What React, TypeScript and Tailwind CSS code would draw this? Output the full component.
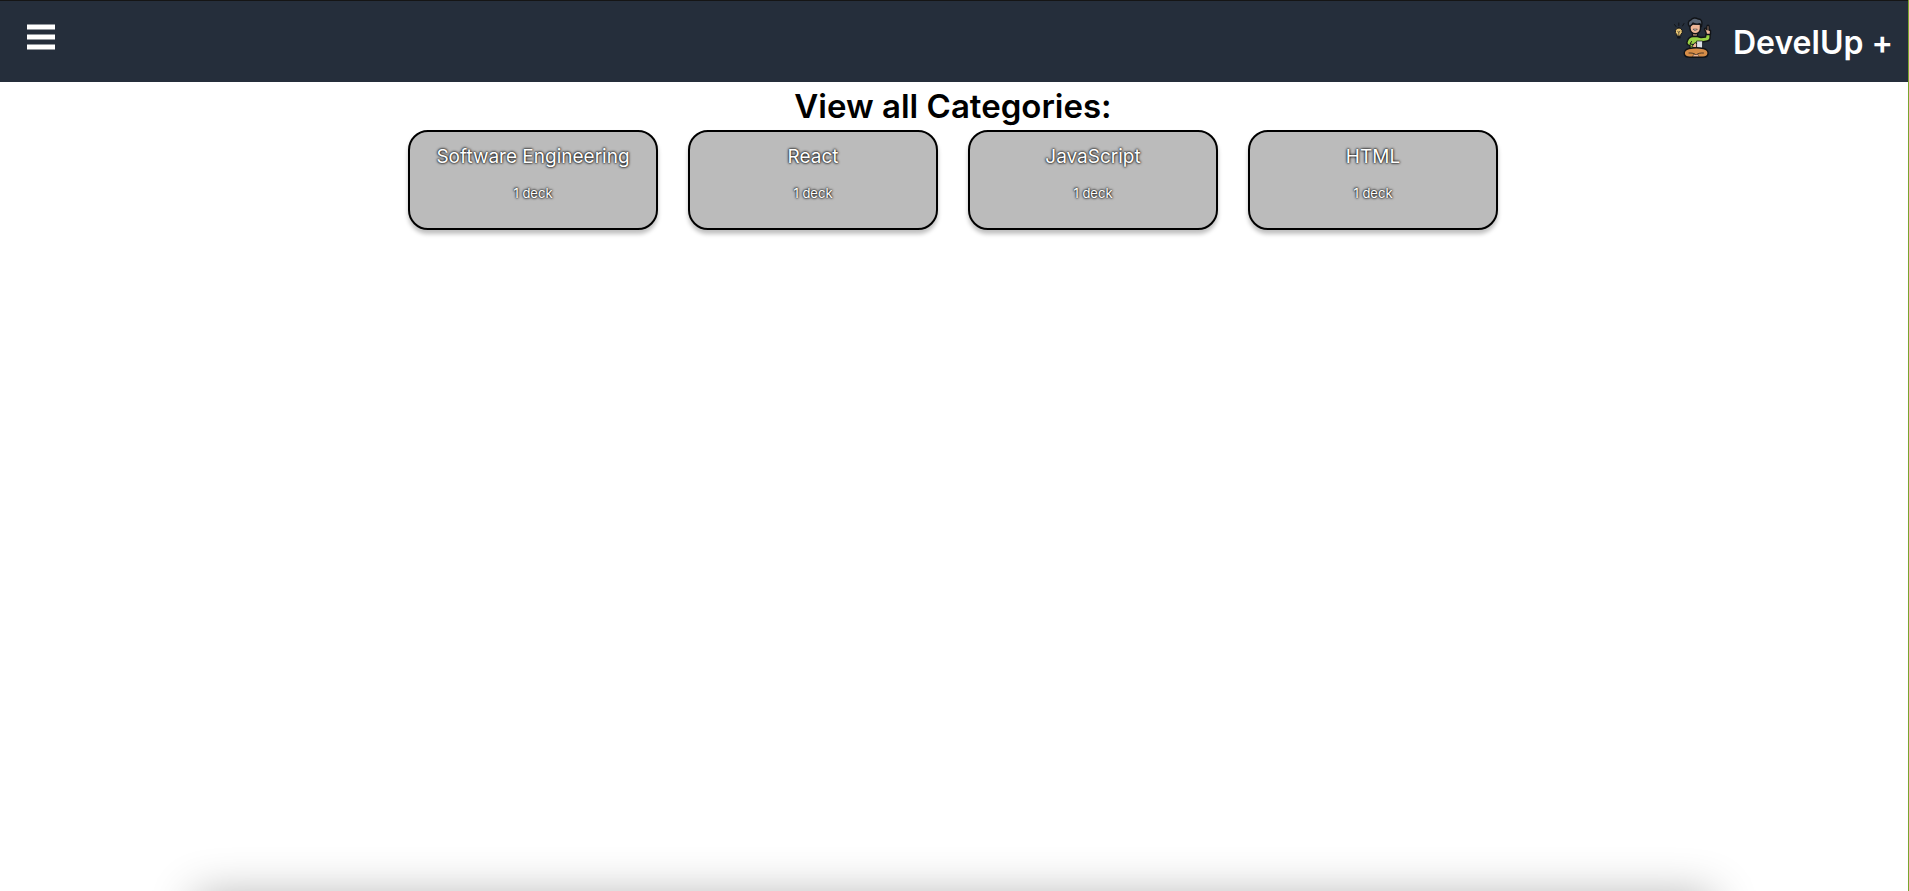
import React from "react";

const categories = ["Software Engineering", "React", "JavaScript", "HTML"];

function MenuIcon() {
  return (
    <svg viewBox="0 0 28 26" className="h-[26px] w-7" fill="#fff" aria-hidden="true">
      <path d="M0 .5h28v5H0zM0 10.500h28v5H0zM0 20.500h28v5H0z" />
    </svg>
  );
}

function Mascot() {
  return (
    <svg viewBox="0 0 40 42" className="h-[42px] w-10" stroke="#111317" strokeWidth="1.4" strokeLinejoin="round" strokeLinecap="round" aria-hidden="true">
      <path d="M5.800 6v2.500M1.500 7.500l1.500 2M11 6.500l-1.500 2.500" fill="none" strokeWidth="1" />
      <path d="M5.800 10.800a3.700 3.700 0 0 0-2 6.700V19h4v-1.500a3.700 3.700 0 0 0-2-6.700z" fill="#e6c372" strokeWidth="1" />
      <path d="M4.700 14.200l1.100 1.200 1.100-1.200M5.800 15.500V18" fill="none" strokeWidth=".6" />
      <path d="M5 20.500h1.800" strokeWidth="1.800" />
      <path d="M19.500 14.500h5v5h-5z" fill="#d9a281" />
      <path d="M17 7h10.500v4.500a5.200 5.200 0 0 1-10.500 0z" fill="#efb798" />
      <path d="M16.500 9.500c-2-2-1.500-6 1.500-6.500 1.500-2.500 5-2.500 7-1 3-.3 5 2.500 3.500 7.500L27 6.800c-2.500.6-5 .4-7-.8-.5 1.800-2 2.500-3.500 3.500z" fill="#586372" />
      <path d="M20.300 12.500c.8 1.500 3 1.500 3.800 0z" fill="#fff" strokeWidth=".5" />
      <path d="M33 15.500l-1.500-3.500c0-1 1.500-1.300 1.800 0l.7.8V9.500c0-1.600 2-1.600 2 0V13l1.500.5V17l-1 2h-3z" fill="#efb798" />
      <path d="M20 19.500h4.500l3.500 1 4.500-.5.500-2.500h4.200l-.2 4c-.3 1.500-1.200 2.300-2.700 2.500l-5.300 1V32H17v-3.500c-2.800-.2-3.800-2.300-2.500-4.800 1-2.600 2.800-4.200 5.500-4.200z" fill="#9bd345" />
      <path d="M18.500 24.500L17 27l3.500.5" fill="none" strokeWidth="1" />
      <path d="M19 29.500l3-4 2.500 1.500-1 4z" fill="#efb798" strokeWidth=".9" />
      <path d="M24 24h5.500v8H24z" fill="#dce1e8" strokeWidth=".7" />
      <path d="M16 31.500c5-1 9.500-1 14.500 0 3 .6 5 3 4.500 5.500-.4 2-2.300 3.300-5 3.300H16.500c-3 0-4.800-1.300-5.200-3.300-.4-2.500 1.700-4.900 4.700-5.500z" fill="#d68d48" />
      <path d="M16 36c3-.2 5.500.3 7.200 2 1.700-1.700 4.300-2.200 7.300-2" fill="none" strokeWidth=".7" />
      <path d="M21 37.500h4l1 2h-6z" fill="#efb798" strokeWidth=".4" />
    </svg>
  );
}

export default function App() {
  return (
    <div className="relative flex min-h-screen flex-col overflow-hidden border-r border-[#7aa52d] bg-white font-[Inter,sans-serif] text-black">
      <header className="flex h-[82px] items-start justify-between border-t border-[#151515] bg-[#252e3b] pr-[15px] pl-[27px]">
        <button type="button" aria-label="Open menu" className="mt-[23px]">
          <MenuIcon />
        </button>
        <a href="#home" className="mt-4 flex items-start gap-5 text-white">
          <Mascot />
          <span className="pt-0.5 text-[32px] leading-[48px] font-semibold">DevelUp +</span>
        </a>
      </header>

      <main className="flex flex-col items-center pr-0.5">
        <h1 className="text-[33px] leading-[48px] font-semibold">View all Categories:</h1>
        <div className="flex flex-wrap justify-center gap-[30px]">
          {categories.map((name) => (
            <a
              key={name}
              href="#decks"
              className="flex h-[100px] w-[250px] flex-col items-center gap-3 rounded-[20px] border-2 border-black bg-[#bbb] pt-3 text-white shadow-[0_4px_4px_rgba(0,0,0,0.25)] [text-shadow:0_0_3px_#000,0_0_2px_#000]"
            >
              <h2 className="text-[19px] leading-[26px]">{name}</h2>
              <p className="text-[13px] leading-[22px]">1 deck</p>
            </a>
          ))}
        </div>
      </main>

      <div className="absolute inset-x-[195px] top-full mt-1 h-20 shadow-[0_0_46px_rgba(0,0,0,0.3)]" />
    </div>
  );
}
